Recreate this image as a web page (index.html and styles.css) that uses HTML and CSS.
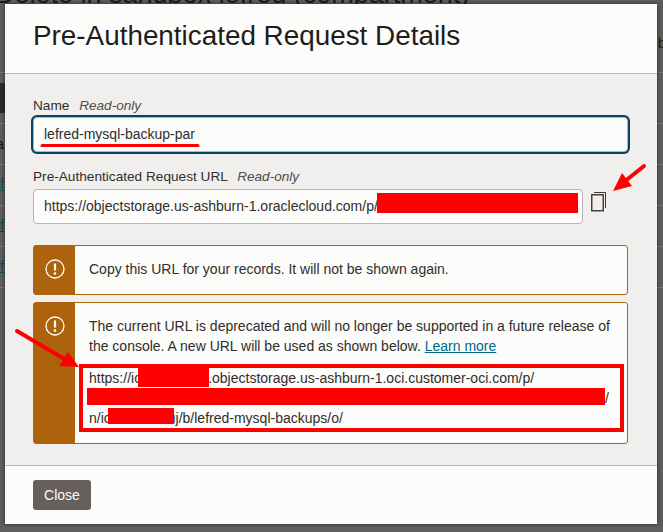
FILE: index.html
```html
<!DOCTYPE html>
<html lang="en">
<head>
    <meta charset="UTF-8">
    <title>Pre-Authenticated Request Details</title>
    <link rel="stylesheet" href="styles.css">
</head>
<body>
    <div class="behind">
        <div class="behind-title">Delete in sandbox lefred (compartment)</div>
        <div class="behind-side">b</div>
        <div class="behind-block"></div>
        <div class="behind-row row-first"></div>
        <div class="behind-row"><span class="behind-text">a</span></div>
        <div class="behind-row"><span class="behind-link">f</span></div>
        <div class="behind-row"><span class="behind-link">f</span></div>
        <div class="behind-row"><span class="behind-link">f</span></div>
        <div class="behind-row"></div>
    </div>

    <div class="modal">
        <div class="modal-header">
            <h1>Pre-Authenticated Request Details</h1>
        </div>

        <div class="modal-body">
            <div class="label">Name <em>Read-only</em></div>
            <div class="field field-focus">lefred-mysql-backup-par</div>

            <div class="label label-url">Pre-Authenticated Request URL <em>Read-only</em></div>
            <div class="url-row">
                <div class="field field-url">https://objectstorage.us-ashburn-1.oraclecloud.com/p/<span class="redact redact-url"></span></div>
                <svg class="copy-icon" width="16" height="20" viewBox="0 0 16 20">
                    <rect x="0.75" y="2.75" width="11.5" height="16" fill="none" stroke="#3a3632" stroke-width="1.4"/>
                    <path d="M3 0.5H14.5V16" fill="none" stroke="#3a3632"/>
                </svg>
            </div>

            <div class="alert alert-first">
                <div class="alert-side">
                    <svg width="20" height="20" viewBox="0 0 20 20">
                        <circle cx="10" cy="10" r="9" fill="none" stroke="#fff" stroke-width="1.3"/>
                        <path d="M10 4.5V11.5" stroke="#fff" stroke-width="2.2"/>
                        <circle cx="10" cy="14.5" r="1.3" fill="#fff"/>
                    </svg>
                </div>
                <div class="alert-text">Copy this URL for your records. It will not be shown again.</div>
            </div>

            <div class="alert">
                <div class="alert-side">
                    <svg width="20" height="20" viewBox="0 0 20 20">
                        <circle cx="10" cy="10" r="9" fill="none" stroke="#fff" stroke-width="1.3"/>
                        <path d="M10 4.5V11.5" stroke="#fff" stroke-width="2.2"/>
                        <circle cx="10" cy="14.5" r="1.3" fill="#fff"/>
                    </svg>
                </div>
                <div class="alert-text">
                    The current URL is deprecated and will no longer be supported in a future release of the console. A new URL will be used as shown below. <a href="#">Learn more</a>
                    <div class="url-box">
                        <div class="url-line">https://ic<span class="redact redact-a"></span>.objectstorage.us-ashburn-1.oci.customer-oci.com/p/</div>
                        <div class="url-line"><span class="redact redact-b"></span>/</div>
                        <div class="url-line">n/ic<span class="redact redact-c"></span>uj/b/lefred-mysql-backups/o/</div>
                    </div>
                </div>
            </div>
        </div>

        <div class="modal-footer">
            <button class="close-btn">Close</button>
        </div>
    </div>

    <!-- red annotations drawn on top of the screenshot -->
    <svg class="marks" width="663" height="532" viewBox="0 0 663 532">
        <path d="M42 145.5H198" stroke="#f00" stroke-width="3" stroke-linecap="round"/>
        <path d="M644 166L624 182" stroke="#f00" stroke-width="4" stroke-linecap="round"/>
        <path d="M613 191L622 173L632 186Z" fill="#f00"/>
        <path d="M17 331L66 360" stroke="#f00" stroke-width="4" stroke-linecap="round"/>
        <path d="M79 367L59 366L68 352Z" fill="#f00"/>
    </svg>
</body>
</html>
```

FILE: styles.css
```css
html, body {
    height: 100%;
}
body {
    margin: 0;
    background: #5f5e5c;
    color: #312d2a;
    font-family: "Liberation Sans", Arial, sans-serif;
    font-size: 14px;
    overflow: hidden;
}

/* dimmed page behind the dialog */
.behind {
    position: absolute;
    top: 0;
    left: 0;
    width: 663px;
    height: 532px;
    overflow: hidden;
}
.behind-title {
    position: absolute;
    top: -21px;
    left: -5px;
    font-size: 27px;
    line-height: 31px;
    color: #1c1a19;
    white-space: nowrap;
}
.behind-side {
    position: absolute;
    top: 35px;
    right: 0;
    width: 5px;
    overflow: hidden;
    color: #1c1a19;
}
.behind-block {
    position: absolute;
    top: 83px;
    left: 0;
    width: 5px;
    height: 30px;
    background: #2e2b29;
}
.behind-row {
    position: relative;
    top: 72px;
    height: 40px;
    border-top: 1px solid #787775;
}
.row-first {
    height: 50px;
}
.behind-text {
    position: absolute;
    left: -4px;
    top: 12px;
    color: #111;
}
.behind-link {
    position: absolute;
    left: 0;
    top: 11px;
    color: #0c4a60;
    text-decoration: underline;
}

/* dialog */
.modal {
    position: relative;
    margin: 4px 0 0 5px;
    width: 652px;
    height: 520px;
    display: flex;
    flex-direction: column;
    background: #fcfcfa;
    box-shadow: 0 0 4px rgba(0, 0, 0, 0.6);
}
.modal-header {
    height: 70px;
    box-sizing: border-box;
    border-bottom: 1px solid #bcb6b1;
    padding: 16px 28px 0;
}
h1 {
    margin: 0;
    font-size: 27.85px;
    font-weight: normal;
    line-height: 32px;
    color: #1f1c1a;
}
.modal-body {
    flex: 1;
    background: #f1efed;
    padding: 23px 28px 0;
}
.modal-footer {
    height: 59px;
    box-sizing: border-box;
    border-top: 1px solid #bcb6b1;
    padding-top: 14px;
}
.close-btn {
    margin-left: 28px;
    width: 58px;
    height: 30px;
    padding: 0;
    border: 0;
    border-radius: 3px;
    background: #665f5b;
    color: #fcfbfa;
    font-family: inherit;
    font-size: 14px;
}

.label {
    font-size: 13.65px;
    line-height: 18px;
    margin-bottom: 2px;
}
.label em {
    margin-left: 6px;
    font-size: 13.6px;
    color: #4f4b48;
}
.label-url {
    margin-top: 16px;
    margin-bottom: 3px;
}
.field {
    box-sizing: border-box;
    border: 1px solid #b9b5b1;
    border-radius: 4px;
    background: #fcfcfa;
    line-height: 20px;
    white-space: nowrap;
}
.field-focus {
    width: 595px;
    height: 35px;
    padding: 6px 10px;
    box-shadow: 0 0 0 2px #04465f;
}
.url-row {
    display: flex;
    align-items: flex-start;
}
.field-url {
    width: 550px;
    height: 35px;
    padding: 6px 10px;
}
.copy-icon {
    margin: 3px 0 0 8px;
}

.alert {
    display: flex;
    width: 595px;
    box-sizing: border-box;
    border: 1px solid #ac630c;
    border-radius: 3px;
    background: #fcfcfa;
    margin-bottom: 7px;
}
.alert-first {
    margin-top: 21px;
    height: 50px;
}
.alert-side {
    width: 41px;
    flex: none;
    background: #ac630c;
    display: flex;
    justify-content: center;
    padding-top: 13px;
    box-sizing: border-box;
}
.alert-side svg {
    display: block;
}
.alert-text {
    flex: 1;
    padding: 13px 3px 11px 14px;
    line-height: 20px;
}
.alert-text a {
    color: #00688c;
}
.url-box {
    margin: 8px 0 0 -10px;
    border: 4px solid #f00;
    padding-left: 6px;
}
.url-line {
    height: 20px;
    white-space: nowrap;
}
.redact {
    display: inline-block;
    position: relative;
    background: #f00;
    vertical-align: top;
}
.redact-url {
    width: 201px;
    height: 20px;
    margin-left: -1px;
    margin-top: -3px;
}
.redact-a {
    width: 71px;
    height: 19px;
    margin-left: -3px;
    margin-right: -1px;
}
.redact-b {
    width: 518px;
    height: 17px;
    margin-left: -2px;
}
.redact-c {
    width: 66px;
    height: 16px;
    margin-left: -3px;
    margin-right: -6px;
}

.marks {
    position: absolute;
    top: 0;
    left: 0;
    pointer-events: none;
}
```
